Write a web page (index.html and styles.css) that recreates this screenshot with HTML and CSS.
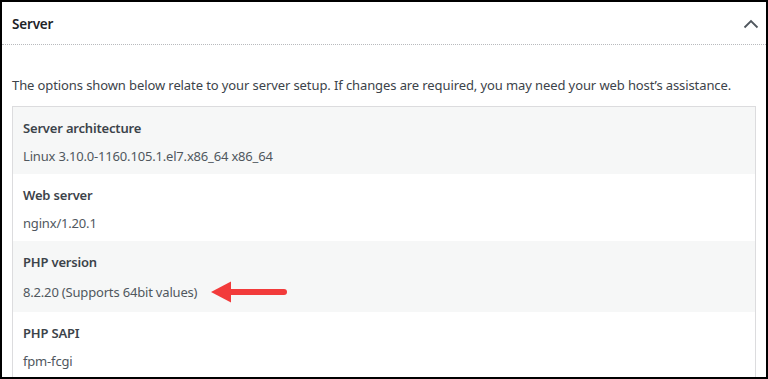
FILE: index.html
```html
<!DOCTYPE html>
<html lang="en">
<head>
<meta charset="UTF-8">
<title>Site Health Info - Server</title>
<link rel="stylesheet" href="styles.css">
</head>
<body>
<div class="frame">
<div class="panel-head">
<h3>Server</h3>
<svg class="chevron" width="16" height="10" viewBox="0 0 16 10" aria-hidden="true">
<polyline points="1.5,8.5 8,2 14.5,8.5" fill="none" stroke="#50575e" stroke-width="1.8"/>
</svg>
</div>

<div class="panel-body">
<p class="intro">The options shown below relate to your server setup. If changes are required, you may need your web host’s assistance.</p>

<div class="info-table">
<div class="info-row">
<div class="info-label">Server architecture</div>
<div class="info-value">Linux 3.10.0-1160.105.1.el7.x86_64 x86_64</div>
</div>
<div class="info-row">
<div class="info-label">Web server</div>
<div class="info-value">nginx/1.20.1</div>
</div>
<div class="info-row">
<div class="info-label">PHP version</div>
<div class="info-value">8.2.20 (Supports 64bit values)
<svg class="arrow" width="80" height="24" viewBox="0 0 80 24" aria-hidden="true">
<line x1="18" y1="12" x2="74" y2="12" stroke="#f23b3b" stroke-width="6" stroke-linecap="round"/>
<polygon points="1,12 21,1.5 21,22.5" fill="#f23b3b"/>
</svg>
</div>
</div>
<div class="info-row">
<div class="info-label">PHP SAPI</div>
<div class="info-value">fpm-fcgi</div>
</div>
</div>
</div>
</div>
</body>
</html>
```

FILE: styles.css
```css
body {
margin: 0;
font-family: 'Noto Sans', 'Open Sans', sans-serif;
font-size: 13px;
letter-spacing: -0.18px;
color: #3c434a;
background: white;
}
.frame {
height: 379px;
box-sizing: border-box;
border: 2px solid #000;
overflow: hidden;
}
.panel-head {
display: flex;
align-items: center;
justify-content: space-between;
height: 43px;
box-sizing: border-box;
padding: 2px 7px 0 10px;
border-bottom: 1px dotted #b8babd;
}
.panel-head h3 {
margin: 0;
font-size: 13.5px;
font-weight: 600;
color: #1d2327;
}
.chevron {
display: block;
margin-top: -1px;
}
.panel-body {
padding: 30px 10px 0;
}
.intro {
margin: 0 0 11px;
line-height: 20px;
letter-spacing: -0.1px;
}
.info-table {
border: 1px solid #dcdcde;
}
.info-row {
padding: 11px 10px 8px;
}
.info-row:nth-child(odd) {
background: #f6f7f7;
}
.info-label {
font-weight: 600;
line-height: 20px;
}
.info-value {
display: flex;
align-items: center;
margin-top: 8px;
line-height: 20px;
color: #50575e;
}
.arrow {
display: block;
margin-left: 13px;
}
```
